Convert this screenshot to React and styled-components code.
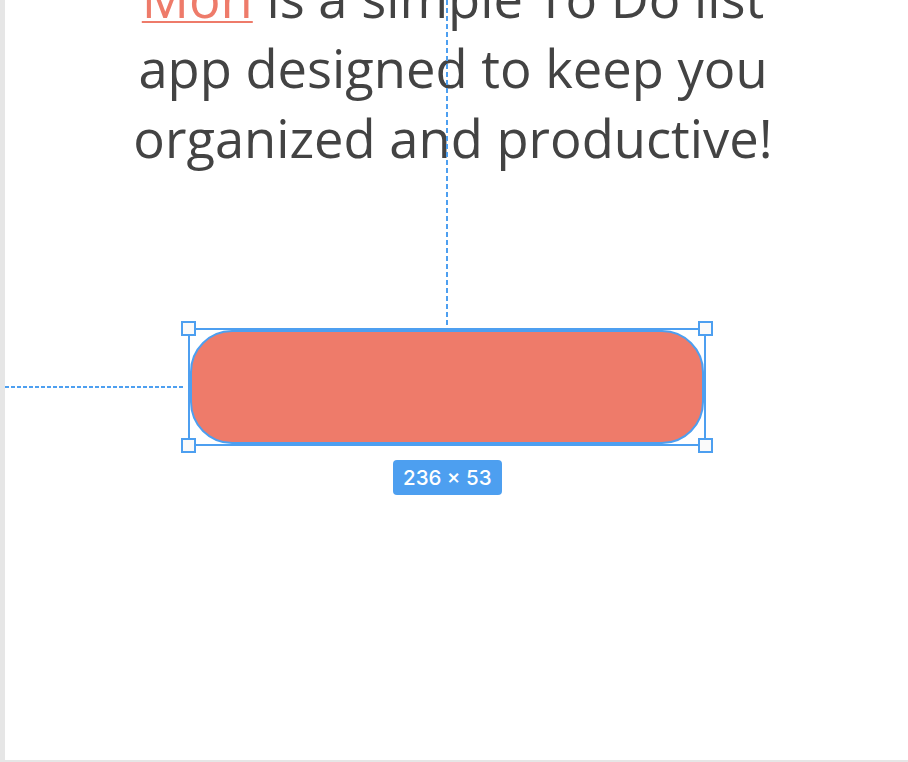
import styled, { createGlobalStyle } from "styled-components";

const GlobalStyle = createGlobalStyle`
  html, body {
    margin: 0;
    padding: 0;
    background: #ffffff;
    overflow: hidden;
  }
`;

const Page = styled.div`
  display: flex;
  width: 908px;
  height: 762px;
  background: #e6e6e6;
`;

const Gutter = styled.div`
  width: 5px;
  flex-shrink: 0;
`;

const Canvas = styled.div`
  position: relative;
  flex: 1;
  height: 760px;
  background: #ffffff;
  display: flex;
  flex-direction: column;
  align-items: flex-start;
  overflow: hidden;
`;

const Intro = styled.p`
  margin: -37px 0 0;
  width: 100%;
  padding-right: 7px;
  box-sizing: border-box;
  font-family: "Open Sans", "Liberation Sans", sans-serif;
  font-size: 52.5px;
  line-height: 70px;
  color: #434343;
  text-align: center;
`;

const Brand = styled.span`
  color: #ee7b6a;
  text-decoration: underline;
  text-decoration-thickness: 1.5px;
  text-underline-offset: 3px;
`;

const Guide = styled.div`
  position: absolute;
  ${({ $vertical }) =>
    $vertical
      ? `
    left: 441px;
    top: 0;
    width: 2px;
    height: 325px;
    background: repeating-linear-gradient(to bottom, #4d9ff0 0 5px, transparent 5px 8px);
  `
      : `
    left: 0;
    top: 386px;
    width: 179px;
    height: 2px;
    background: repeating-linear-gradient(to right, #4d9ff0 0 4px, transparent 4px 6px);
  `}
`;

const Selection = styled.div`
  position: relative;
  margin: 155px 0 0 183px;
  width: 518px;
  height: 118px;
  box-sizing: border-box;
  border: 2px solid #4d9ff0;
`;

const ActionButton = styled.button`
  display: block;
  width: 100%;
  height: 100%;
  box-sizing: border-box;
  padding: 0;
  border: 2px solid #4d9ff0;
  border-radius: 42px;
  background: #ee7b6a;
  cursor: pointer;
`;

const Handle = styled.span`
  position: absolute;
  width: 15px;
  height: 15px;
  box-sizing: border-box;
  border: 2px solid #4d9ff0;
  background: #fafafa;
  ${({ $x }) => ($x === "left" ? "left: -9px;" : "right: -9px;")}
  ${({ $y }) => ($y === "top" ? "top: -9px;" : "bottom: -9px;")}
`;

const SizeTag = styled.div`
  margin: 14px 0 0 388px;
  height: 35px;
  padding: 0 10px;
  display: flex;
  align-items: center;
  border-radius: 4px;
  background: #4d9ff0;
  color: #ffffff;
  font-family: Inter, "Liberation Sans", sans-serif;
  font-size: 20.5px;
  font-weight: 500;
`;

export default function App() {
  return (
    <>
      <GlobalStyle />
      <Page>
        <Gutter />
        <Canvas>
          <Intro>
            <Brand>Mon</Brand> is a simple To Do list
            <br />
            app designed to keep you
            <br />
            organized and productive!
          </Intro>
          <Guide $vertical />
          <Guide />
          <Selection>
            <ActionButton aria-label="Get started" />
            <Handle $x="left" $y="top" />
            <Handle $x="right" $y="top" />
            <Handle $x="left" $y="bottom" />
            <Handle $x="right" $y="bottom" />
          </Selection>
          <SizeTag>236 × 53</SizeTag>
        </Canvas>
      </Page>
    </>
  );
}
